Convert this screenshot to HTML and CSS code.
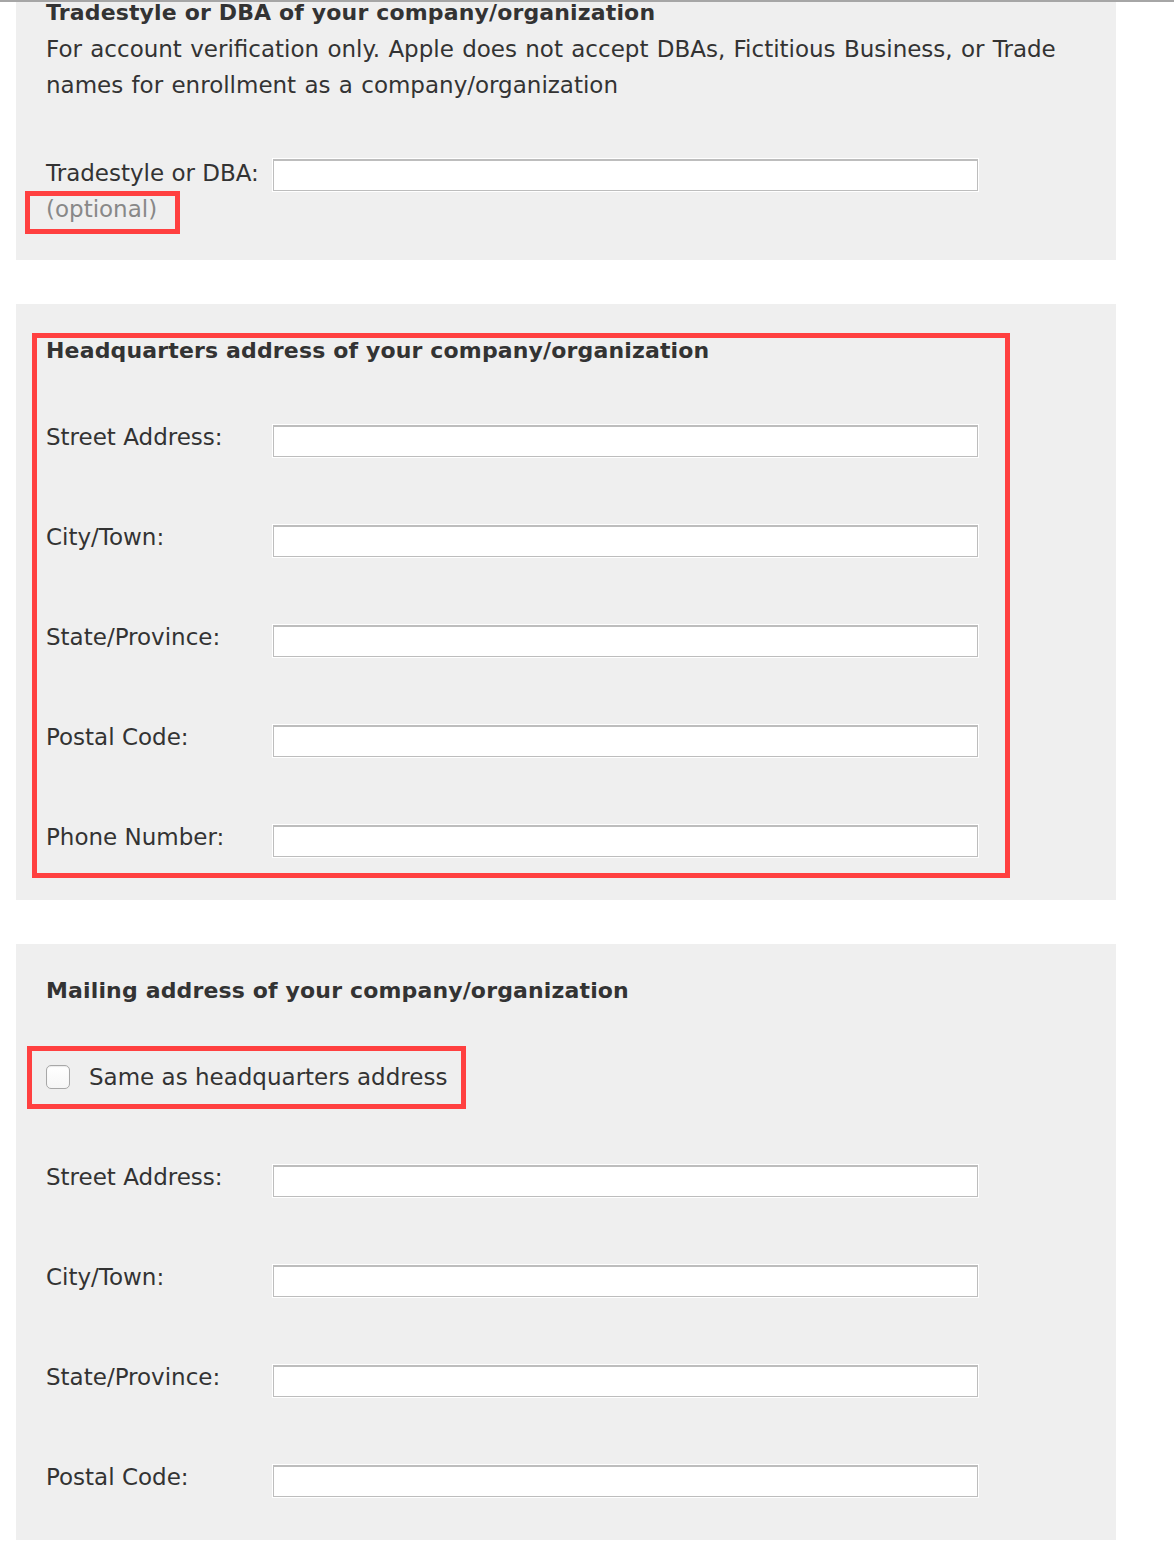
FILE: index.html
```html
<!DOCTYPE html>
<html>
<head>
<meta charset="utf-8">
<link rel="stylesheet" href="styles.css">
</head>
<body>
<div class="topbar"></div>
<div class="page">
  <section class="panel panel-first">
    <h2 class="heading heading-tight">Tradestyle or DBA of your company/organization</h2>
    <p class="desc">For account verification only. Apple does not accept DBAs, Fictitious Business, or Trade names for enrollment as a company/organization</p>
    <div class="row row-dba">
      <label class="label">Tradestyle or DBA:<br><span class="optional">(optional)</span></label>
      <input class="field" type="text">
    </div>
    <div class="mark mark-optional"></div>
  </section>

  <section class="panel">
    <h2 class="heading">Headquarters address of your company/organization</h2>
    <div class="rows">
      <div class="row"><label class="label">Street Address:</label><input class="field" type="text"></div>
      <div class="row"><label class="label">City/Town:</label><input class="field" type="text"></div>
      <div class="row"><label class="label">State/Province:</label><input class="field" type="text"></div>
      <div class="row"><label class="label">Postal Code:</label><input class="field" type="text"></div>
      <div class="row"><label class="label">Phone Number:</label><input class="field" type="text"></div>
    </div>
    <div class="mark mark-hq"></div>
  </section>

  <section class="panel">
    <h2 class="heading">Mailing address of your company/organization</h2>
    <div class="rows">
      <label class="check-row"><span class="checkbox"></span><span class="check-text">Same as headquarters address</span></label>
      <div class="row"><label class="label">Street Address:</label><input class="field" type="text"></div>
      <div class="row"><label class="label">City/Town:</label><input class="field" type="text"></div>
      <div class="row"><label class="label">State/Province:</label><input class="field" type="text"></div>
      <div class="row"><label class="label">Postal Code:</label><input class="field" type="text"></div>
    </div>
    <div class="mark mark-same"></div>
  </section>
</div>
</body>
</html>
```

FILE: styles.css
```css
html, body {
  margin: 0;
  padding: 0;
  background: #ffffff;
}
body {
  font-family: "DejaVu Sans", "Liberation Sans", sans-serif;
  font-size: 23px;
  color: #333333;
}
.topbar {
  height: 2px;
  background: #a6a6a6;
}
.page {
  display: flex;
  flex-direction: column;
  gap: 44px;
  padding: 0 58px 16px 16px;
}
.panel {
  position: relative;
  background: #efefef;
  padding: 29px 30px 45px 30px;
}
.panel-first {
  padding-top: 0;
  padding-bottom: 33px;
}
.heading {
  margin: 0 0 50px 0;
  font-size: 22px;
  font-weight: bold;
  line-height: 36px;
  letter-spacing: 0.15px;
  color: #333333;
}
.heading-tight {
  line-height: 22px;
  margin-bottom: 7px;
}
.desc {
  margin: 0 0 52px 0;
  line-height: 36px;
  word-spacing: 1px;
  max-width: 1040px;
}
.rows {
  display: flex;
  flex-direction: column;
  gap: 64px;
}
.row {
  display: flex;
  align-items: flex-start;
  height: 36px;
}
.row .field {
  margin-top: 6px;
}
.row-dba {
  height: auto;
}
.row-dba .field {
  margin-top: 4px;
}
.label {
  width: 227px;
  flex: 0 0 227px;
  line-height: 36px;
}
.optional {
  color: #888888;
}
.field {
  box-sizing: border-box;
  width: 705px;
  height: 32px;
  margin: 0;
  padding: 0 6px;
  border: 1px solid #bdbdbd;
  border-top-width: 2px;
  background: #ffffff;
  box-shadow: 0 0 0 1px #ffffff;
  font: inherit;
  outline: none;
}
.check-row {
  display: flex;
  align-items: center;
  height: 36px;
}
.check-text {
  line-height: 36px;
  margin-left: 19px;
}
.checkbox {
  box-sizing: border-box;
  width: 24px;
  height: 24px;
  border: 1px solid #a8a8a8;
  border-radius: 5px;
  background: linear-gradient(#ffffff, #f6f6f6);
  box-shadow: inset 0 1px 1px rgba(0,0,0,0.08);
}
.mark {
  position: absolute;
  box-sizing: border-box;
  border: 5px solid #ff4040;
  pointer-events: none;
}
.mark-optional {
  left: 9px;
  top: 189px;
  width: 155px;
  height: 43px;
}
.mark-hq {
  left: 16px;
  top: 29px;
  width: 978px;
  height: 545px;
}
.mark-same {
  left: 11px;
  top: 102px;
  width: 439px;
  height: 63px;
}
```
